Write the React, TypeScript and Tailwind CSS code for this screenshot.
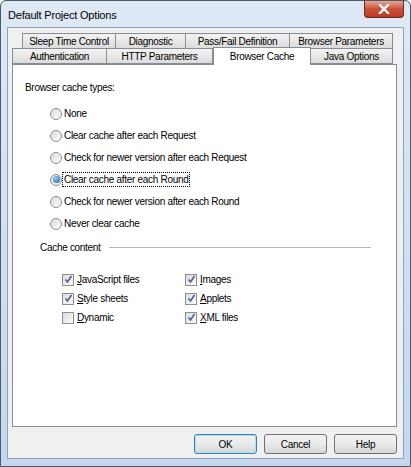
import React from 'react';

const font = { fontFamily: '"Liberation Sans", Arial, sans-serif' };

const Radio: React.FC<{ label: string; checked?: boolean; focused?: boolean }> = ({ label, checked, focused }) => (
  <div className="flex items-center h-[13px]">
    <span className="w-[12px] h-[12px] rounded-full border border-[#8e8f8f] bg-gradient-to-br from-[#dcdcdc] to-[#fbfbfb] flex items-center justify-center">
      {checked && <span className="w-[7px] h-[7px] rounded-full bg-[radial-gradient(circle_at_35%_35%,#8fd0f5,#1b5a9e)]" />}
    </span>
    <span className={`ml-[1px] px-[1px] leading-[13px] ${focused ? 'outline outline-1 outline-dotted outline-black' : ''}`}>{label}</span>
  </div>
);

const Check: React.FC<{ u: string; rest: string; checked?: boolean }> = ({ u, rest, checked }) => (
  <div className="flex items-center h-[13px]">
    <span className="w-[12px] h-[12px] border border-[#8e8f8f] bg-gradient-to-br from-[#dcdcdc] to-[#fbfbfb] flex items-center justify-center">
      {checked && (
        <svg width="9" height="9" viewBox="0 0 9 9">
          <path d="M1.5 4.5 L3.5 7 L7.5 1" stroke="#4a5f97" strokeWidth="1.6" fill="none" />
        </svg>
      )}
    </span>
    <span className="ml-[3px] leading-[13px]">
      <span className="underline">{u}</span>
      {rest}
    </span>
  </div>
);

const Tab: React.FC<{ label: string; w: string; selected?: boolean }> = ({ label, w, selected }) =>
  selected ? (
    <div className={`${w} h-[18px] -mt-[2px] -mb-[1px] relative z-10 bg-white border border-b-0 border-[#898c95] flex items-center justify-center whitespace-nowrap`}>
      {label}
    </div>
  ) : (
    <div className={`${w} h-[16px] bg-gradient-to-b from-[#f3f3f3] to-[#dcdcdc] border border-[#898c95] -ml-[1px] first:ml-0 flex items-center justify-center whitespace-nowrap`}>
      {label}
    </div>
  );

const Btn: React.FC<{ label: string; def?: boolean }> = ({ label, def }) => (
  <div
    className={`w-[63px] h-[20px] rounded-[3px] border flex items-center justify-center bg-gradient-to-b from-[#f2f2f2] via-[#ebebeb] to-[#d6d6d6] ${
      def ? 'border-[#3c7fb1] shadow-[inset_0_0_0_1px_#a6e3fa]' : 'border-[#707070]'
    }`}
  >
    {label}
  </div>
);

export default function App() {
  return (
    <div style={font} className="w-[411px] h-[467px] bg-white">
      <div className="w-[411px] h-[467px] rounded-t-[6px] border border-[#4a5a6e] bg-gradient-to-b from-[#dfe9f5] to-[#c4d7ee] flex flex-col">
        <div className="h-[26px] flex items-start justify-between pl-[7px]">
          <span className="mt-[6px] text-[11px] tracking-[-0.2px] text-black">Default Project Options</span>
          <div className="mr-[6px] w-[40px] h-[17px] rounded-b-[4px] border border-t-0 border-[#6b2a22] bg-gradient-to-b from-[#e8a493] via-[#c7503a] to-[#c13a23] flex items-center justify-center">
            <svg width="12" height="10" viewBox="0 0 12 10">
              <path d="M2 1 L10 9 M10 1 L2 9" stroke="#ffffff" strokeWidth="2.4" strokeLinecap="square" />
            </svg>
          </div>
        </div>
        <div className="flex-1 mx-[6px] mb-[7px] border border-[#8da2bd] bg-[#f0f0f0] text-[10px] tracking-[-0.3px] text-black flex flex-col px-[4px] pt-[5px]">
          <div className="flex pl-[10px]">
            <Tab label="Sleep Time Control" w="w-[94px]" />
            <Tab label="Diagnostic" w="w-[71px]" />
            <Tab label="Pass/Fail Definition" w="w-[105px]" />
            <Tab label="Browser Parameters" w="w-[104px]" />
          </div>
          <div className="flex -mt-[1px] items-end">
            <Tab label="Authentication" w="w-[95px]" />
            <Tab label="HTTP Parameters" w="w-[107px]" />
            <Tab label="Browser Cache" w="w-[98px]" selected />
            <Tab label="Java Options" w="w-[83px]" />
          </div>
          <div className="h-[363px] w-[385px] bg-white border border-[#898c95] pl-[12px] pt-[16px]">
            <div className="leading-[13px]">Browser cache types:</div>
            <div className="flex flex-col gap-[9px] pl-[25px] mt-[13px]">
              <Radio label="None" />
              <Radio label="Clear cache after each Request" />
              <Radio label="Check for newer version after each Request" />
              <Radio label="Clear cache after each Round" checked focused />
              <Radio label="Check for newer version after each Round" />
              <Radio label="Never clear cache" />
            </div>
            <div className="flex items-center mt-[10px] pl-[15px] pr-[25px]">
              <span>Cache content</span>
              <div className="flex-1 ml-[8px] border-t border-[#b9b9b9]" />
            </div>
            <div className="grid grid-cols-[123px_1fr] gap-y-[6px] pl-[37px] mt-[18px]">
              <Check checked u="J" rest="avaScript files" />
              <Check checked u="I" rest="mages" />
              <Check checked u="S" rest="tyle sheets" />
              <Check checked u="A" rest="pplets" />
              <Check u="D" rest="ynamic" />
              <Check checked u="X" rest="ML files" />
            </div>
          </div>
          <div className="flex justify-end gap-[7px] mt-[7px] pr-[2px]">
            <Btn label="OK" def />
            <Btn label="Cancel" />
            <Btn label="Help" />
          </div>
        </div>
      </div>
    </div>
  );
}
